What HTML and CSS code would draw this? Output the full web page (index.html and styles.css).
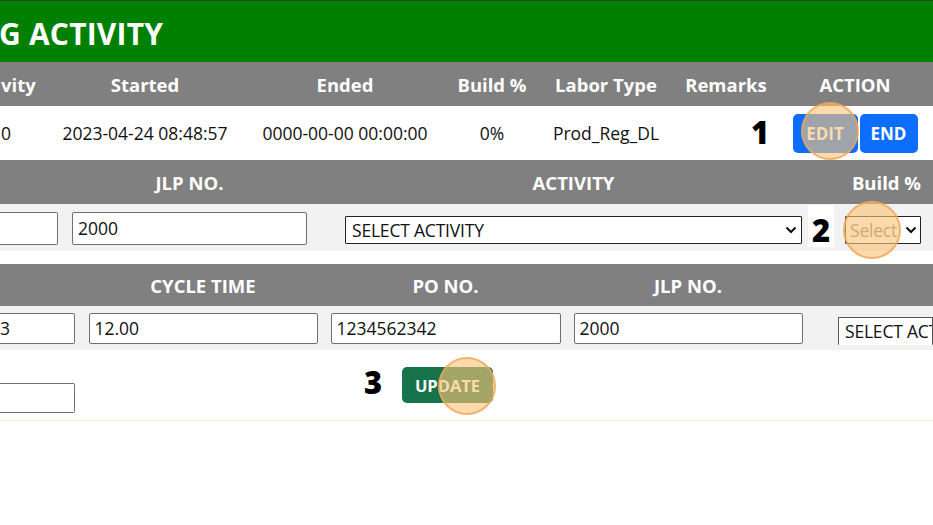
FILE: index.html
```html
<!DOCTYPE html>
<html lang="en">
<head>
<meta charset="utf-8">
<title>Activity</title>
<link rel="stylesheet" href="styles.css">
</head>
<body>
<div class="page">
  <header class="title">G ACTIVITY</header>

  <section class="tbl t1">
    <div class="row head">
      <div class="cell left">vity</div>
      <div class="cell">Started</div>
      <div class="cell">Ended</div>
      <div class="cell">Build %</div>
      <div class="cell">Labor Type</div>
      <div class="cell">Remarks</div>
      <div class="cell">ACTION</div>
    </div>
    <div class="row data">
      <div class="cell left">0</div>
      <div class="cell">2023-04-24 08:48:57</div>
      <div class="cell">0000-00-00 00:00:00</div>
      <div class="cell">0%</div>
      <div class="cell">Prod_Reg_DL</div>
      <div class="cell"></div>
      <div class="cell actions">
        <button class="btn blue edit">EDIT</button>
        <button class="btn blue end">END</button>
      </div>
    </div>
  </section>

  <section class="tbl t2">
    <div class="row head">
      <div class="cell"></div>
      <div class="cell">JLP NO.</div>
      <div class="cell">ACTIVITY</div>
      <div class="cell right">Build %</div>
    </div>
    <div class="row body">
      <div class="cell start"><div class="field cut w58"></div></div>
      <div class="cell"><div class="field w235">2000</div></div>
      <div class="cell"><div class="sel w457"><span>SELECT ACTIVITY</span><svg viewBox="0 0 12 8" width="12" height="8"><path d="M1.5 1.5 L6 6 L10.5 1.5" fill="none" stroke="#111" stroke-width="2"/></svg></div></div>
      <div class="cell"><div class="sel w76 muted"><span>Select</span><svg viewBox="0 0 12 8" width="12" height="8"><path d="M1.5 1.5 L6 6 L10.5 1.5" fill="none" stroke="#111" stroke-width="2"/></svg></div></div>
    </div>
  </section>

  <section class="tbl t3">
    <div class="row head">
      <div class="cell"></div>
      <div class="cell">CYCLE TIME</div>
      <div class="cell">PO NO.</div>
      <div class="cell">JLP NO.</div>
      <div class="cell"></div>
    </div>
    <div class="row body">
      <div class="cell start"><div class="field cut w75">3</div></div>
      <div class="cell"><div class="field w229">12.00</div></div>
      <div class="cell"><div class="field w230">1234562342</div></div>
      <div class="cell"><div class="field w229">2000</div></div>
      <div class="cell start"><div class="sel open w120"><span>SELECT ACTIVITY</span></div></div>
    </div>
  </section>

  <div class="footer-row">
    <div class="field cut w75 short"></div>
    <button class="btn green update">UPDATE</button>
  </div>
  <div class="rule"></div>
</div>

<div class="mark m1">1</div>
<div class="mark m2">2</div>
<div class="mark m3">3</div>
<div class="ring r1"></div>
<div class="ring r2"></div>
<div class="ring r3"></div>
</body>
</html>
```

FILE: styles.css
```css
html, body {
  margin: 0;
  padding: 0;
  background: #ffffff;
  overflow: hidden;
}
body {
  width: 933px;
  height: 525px;
  position: relative;
  font-family: "Open Sans", "Noto Sans", sans-serif;
  color: #111;
}
.page {
  width: 933px;
}
.title {
  height: 61px;
  border-top: 1px solid #1f4a1f;
  background: #008000;
  color: #fff;
  font-weight: 700;
  font-size: 30px;
  line-height: 66px;
  padding-left: 0;
  margin-left: -1px;
  letter-spacing: 0.2px;
}
.row {
  display: grid;
  align-items: center;
}
.head {
  background: #808080;
  color: #fff;
  font-weight: 700;
  font-size: 18.5px;
}
.cell {
  text-align: center;
  white-space: nowrap;
}
.cell.left { text-align: left; padding-left: 1px; }
.cell.right { text-align: right; padding-right: 12px; }

.t1 .row { grid-template-columns: 50px 190px 210px 84px 144px 96px 162px; }
.t1 .head { height: 44px; }
.t1 .data { height: 54px; font-size: 17.5px; }

.actions {
  display: flex;
  justify-content: center;
  gap: 2px;
}
.btn {
  border: none;
  border-radius: 5px;
  color: #fff;
  font-family: "Open Sans", "Noto Sans", sans-serif;
  font-weight: 700;
  font-size: 17px;
  padding: 0;
  cursor: pointer;
}
.blue { background: #0d6efd; }
.edit { width: 65px; height: 39px; }
.end { width: 58px; height: 39px; }

.t2 .row { grid-template-columns: 65px 249px 519px 100px; }
.t2 .head { height: 44px; }
.t2 .body {
  height: 47px;
  background: #f2f2f2;
  justify-items: center;
}
.t2 { margin-bottom: 13px; }
.t2 .field { margin-top: 1px; }
.t2 .sel { margin-top: 4px; }

.t3 .row { grid-template-columns: 82px 242px 243px 242px 124px; }
.t3 .head { height: 42px; }
.t3 .body {
  height: 44px;
  background: #f2f2f2;
  justify-items: center;
}
.cell.start { justify-self: stretch; display: flex; }
.t3 .cell.start:last-child { padding-left: 29px; }
.t3 .sel { margin-top: 5px; }

.field {
  box-sizing: border-box;
  height: 33px;
  border: 1px solid #6f6f6f;
  border-radius: 2px;
  background: #fff;
  font-size: 17.5px;
  line-height: 31px;
  padding-left: 5px;
  text-align: left;
}
.t3 .field { height: 31px; line-height: 29px; }
.field.cut {
  border-left: none;
  border-radius: 0 2px 2px 0;
  padding-left: 0;
}
.w58 { width: 58px; }
.w75 { width: 75px; }
.w229 { width: 229px; }
.w230 { width: 230px; }
.w235 { width: 235px; }

.sel {
  box-sizing: border-box;
  height: 28px;
  border: 1px solid #222;
  border-radius: 1px;
  background: #fff;
  font-size: 17.5px;
  display: flex;
  align-items: center;
  justify-content: space-between;
  padding: 0 4px 0 6px;
  text-align: left;
  overflow: hidden;
}
.sel span { line-height: 26px; letter-spacing: -0.2px; }
.sel svg { flex: none; margin-left: 2px; }
.w457 { width: 457px; }
.w76 { width: 76px; padding-left: 4px; padding-right: 3px; }
.w120 { width: 120px; }
.sel.muted span { color: #8a7d6a; }
.sel.open {
  height: 28px;
  border-bottom: none;
  border-color: #555;
  justify-content: flex-start;
}

.footer-row {
  height: 70px;
  display: flex;
  align-items: flex-start;
}
.footer-row .short {
  height: 30px;
  margin-top: 33px;
}
.green { background: #17744a; }
.update {
  width: 91px;
  height: 36px;
  margin-top: 17px;
  margin-left: 327px;
  font-size: 16.5px;
}
.rule {
  height: 1px;
  background: #fff3c8;
}

.mark {
  position: absolute;
  font-family: "Open Sans", "Noto Sans", sans-serif;
  font-weight: 800;
  font-size: 31px;
  line-height: 1;
  color: #000;
}
.m1 { left: 751px; top: 117px; }
.m2 {
  left: 808px;
  top: 205px;
  width: 26px;
  height: 42px;
  background: #fff;
  text-align: center;
  line-height: 50px;
}
.m3 { left: 364px; top: 367px; }

.ring {
  position: absolute;
  width: 58px;
  height: 58px;
  border-radius: 50%;
  box-sizing: border-box;
  background: rgba(250, 195, 120, 0.62);
  border: 2px solid rgba(238, 165, 85, 0.75);
}
.r1 { left: 801px; top: 102px; }
.r2 { left: 843px; top: 201px; }
.r3 { left: 438px; top: 357px; }
```
